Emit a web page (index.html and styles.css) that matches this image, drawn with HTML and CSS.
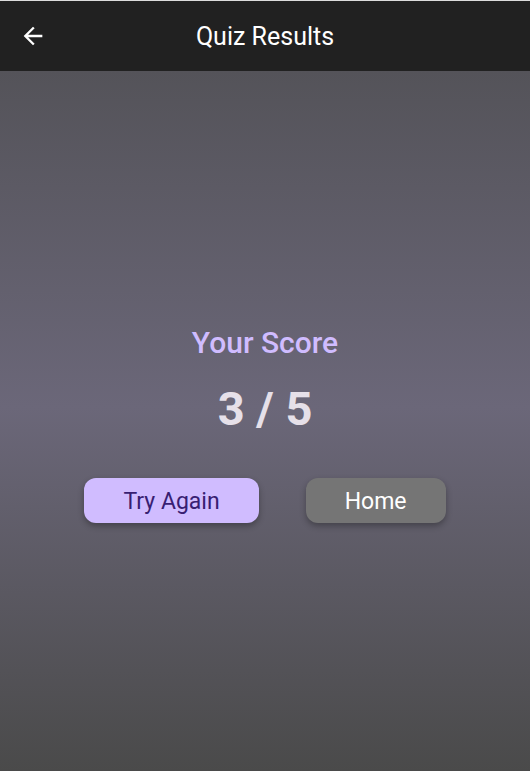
FILE: index.html
```html
<!DOCTYPE html>
<html>
<head>
<meta charset="utf-8">
<link rel="stylesheet" href="styles.css">
</head>
<body>
<div class="app">
  <header class="appbar">
    <button class="back" aria-label="Back">
      <svg width="28" height="28" viewBox="0 0 24 24"><path fill="#fff" d="M20 11H7.83l5.59-5.59L12 4l-8 8 8 8 1.41-1.41L7.83 13H20v-2z"/></svg>
    </button>
    <h1 class="title">Quiz Results</h1>
  </header>
  <main class="content">
    <div class="result">
      <div class="label">Your Score</div>
      <div class="score">3 / 5</div>
      <div class="actions">
        <button class="btn primary">Try Again</button>
        <button class="btn secondary">Home</button>
      </div>
    </div>
  </main>
</div>
</body>
</html>
```
FILE: styles.css
```css
html, body {
  margin: 0;
  padding: 0;
  height: 100%;
}
body {
  font-family: Roboto, "Noto Sans", sans-serif;
  background: #4a4a4a;
}
.app {
  height: 771px;
  display: flex;
  flex-direction: column;
  border-top: 1px solid #dcdcdc;
  box-sizing: border-box;
}
.appbar {
  height: 70px;
  flex: none;
  background: #212121;
  display: flex;
  align-items: center;
  position: relative;
}
.back {
  width: 48px;
  height: 48px;
  margin-left: 9px;
  background: none;
  border: none;
  padding: 0;
  display: flex;
  align-items: center;
  justify-content: center;
}
.title {
  position: absolute;
  left: 0;
  right: 0;
  text-align: center;
  margin: 0;
  font-size: 25px;
  font-weight: 400;
  color: #fff;
  pointer-events: none;
}
.content {
  flex: 1;
  background: linear-gradient(to bottom, #545359 0%, #6b6779 48%, #4a4a4a 100%);
  display: flex;
  align-items: center;
  justify-content: center;
}
.result {
  display: flex;
  flex-direction: column;
  align-items: center;
  margin-top: 6px;
}
.label {
  font-size: 30px;
  font-weight: 500;
  color: #d0bcff;
  line-height: 36px;
}
.score {
  font-size: 47px;
  font-weight: 700;
  color: #e6e0e9;
  line-height: 56px;
  margin-top: 20px;
}
.actions {
  display: flex;
  gap: 47px;
  margin-top: 41px;
}
.btn {
  font-family: Roboto, "Noto Sans", sans-serif;
  font-size: 23px;
  height: 45px;
  border: none;
  border-radius: 12px;
  padding: 2px 39px 0;
  box-shadow: 0 3px 6px rgba(0,0,0,0.3);
}
.primary {
  background: #d0bcff;
  color: #381e72;
}
.secondary {
  background: #757575;
  color: #fff;
}
```
